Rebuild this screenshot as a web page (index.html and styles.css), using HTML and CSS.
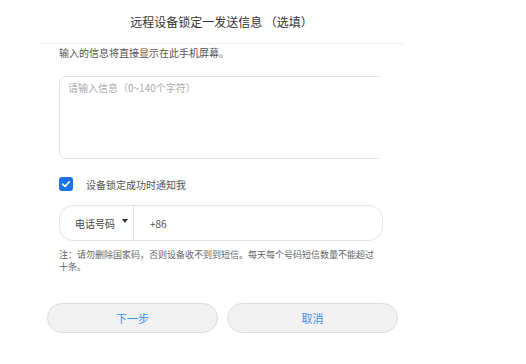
FILE: index.html
```html
<!DOCTYPE html>
<html lang="zh-CN">
<head>
<meta charset="utf-8">
<link rel="stylesheet" href="styles.css">
</head>
<body>
<div class="dialog">
  <div class="header">远程设备锁定一发送信息 （选填）</div>
  <div class="body">
    <p class="intro">输入的信息将直接显示在此手机屏幕。</p>
    <div class="area-clip">
      <div class="area"><span class="placeholder">请输入信息（0~140个字符）</span></div>
    </div>
    <label class="check-row">
      <span class="checkbox">
        <svg width="10" height="10" viewBox="0 0 10 10"><path d="M1.6 5.2 L4 7.4 L8.4 2.8" fill="none" stroke="#fff" stroke-width="1.6" stroke-linecap="round" stroke-linejoin="round"/></svg>
      </span>
      <span class="check-label">设备锁定成功时通知我</span>
    </label>
    <div class="phone">
      <div class="select">电话号码<span class="caret"></span></div>
      <div class="prefix">+86</div>
    </div>
    <p class="note">注：请勿删除国家码，否则设备收不到到短信。每天每个号码短信数量不能超过十条。</p>
  </div>
  <div class="actions">
    <button class="btn">下一步</button>
    <button class="btn">取消</button>
  </div>
</div>
</body>
</html>
```
FILE: styles.css
```css
html, body {
  margin: 0;
  padding: 0;
  background: #fff;
}
body {
  font-family: "Noto Sans CJK SC", "Liberation Sans", sans-serif;
  color: #333;
}
.dialog {
  width: 365px;
  margin-left: 39px;
}
.header {
  height: 43px;
  line-height: 44px;
  text-align: center;
  font-size: 12px;
  color: #333;
  border-bottom: 1px solid #f2f2f2;
}
.body {
  padding-left: 20px;
}
.intro {
  margin: 0;
  padding-top: 2px;
  font-size: 10px;
  line-height: 14px;
  color: #555;
}
.area-clip {
  margin-top: 16px;
  width: 320px;
  overflow: hidden;
}
.area {
  width: 340px;
  height: 81px;
  border: 1px solid #e4e4e4;
  border-radius: 7px;
  box-sizing: content-box;
}
.placeholder {
  display: block;
  padding: 4px 0 0 8px;
  font-size: 10px;
  line-height: 14px;
  color: #aaa;
}
.check-row {
  display: flex;
  align-items: center;
  margin-top: 18px;
  height: 14px;
}
.checkbox {
  width: 14px;
  height: 14px;
  border-radius: 3px;
  background: #1a73e8;
  display: flex;
  align-items: center;
  justify-content: center;
}
.check-label {
  margin-left: 13px;
  font-size: 10px;
  color: #555;
}
.phone {
  margin-top: 14px;
  width: 322px;
  height: 34px;
  border: 1px solid #e4e4e4;
  border-radius: 14px;
  display: flex;
  align-items: center;
}
.select {
  width: 74px;
  height: 100%;
  border-right: 1px solid #e4e4e4;
  display: flex;
  align-items: center;
  padding-left: 15px;
  box-sizing: border-box;
  font-size: 10px;
  color: #444;
}
.caret {
  margin-left: 7px;
  margin-top: -4px;
  width: 0;
  height: 0;
  border-left: 3.5px solid transparent;
  border-right: 3.5px solid transparent;
  border-top: 4px solid #333;
}
.prefix {
  padding-left: 16px;
  font-size: 10px;
  color: #555;
}
.note {
  margin: 8px 0 0;
  width: 318px;
  font-size: 9px;
  line-height: 12px;
  color: #666;
}
.actions {
  display: flex;
  gap: 9px;
  padding-left: 8px;
  margin-top: 30px;
}
.btn {
  width: 171px;
  height: 30px;
  border: 1px solid #dcdcdc;
  border-radius: 15px;
  background: #f1f1f1;
  color: #3d8df0;
  font-family: "Noto Sans CJK SC", sans-serif;
  font-size: 11px;
  padding: 0;
}
```
